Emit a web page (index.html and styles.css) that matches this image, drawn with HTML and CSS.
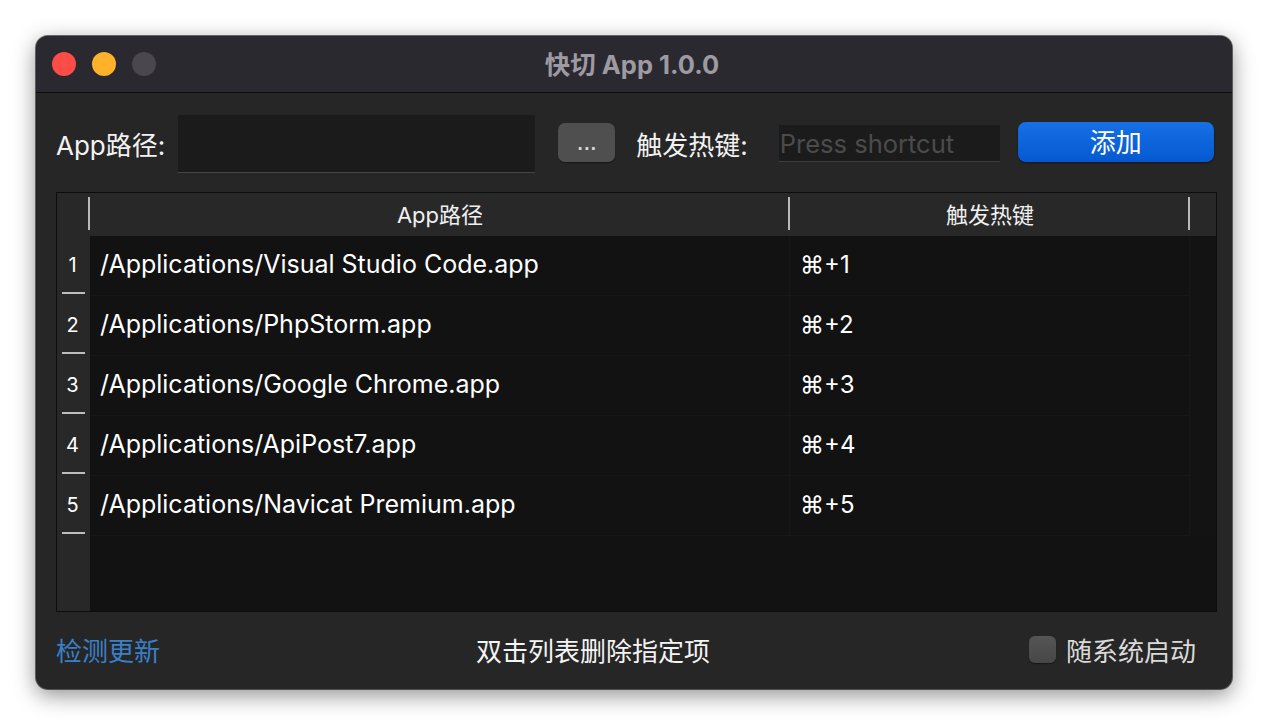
FILE: index.html
```html
<!DOCTYPE html>
<html lang="zh-CN">
<head>
<meta charset="utf-8">
<title>快切 App 1.0.0</title>
<link rel="stylesheet" href="styles.css">
</head>
<body>
<div class="window">
  <div class="titlebar">
    <div class="lights">
      <span class="light red"></span>
      <span class="light yellow"></span>
      <span class="light grey"></span>
    </div>
    <div class="title">快切 App 1.0.0</div>
  </div>
  <div class="content">
    <div class="form-row">
      <label class="label">App路径:</label>
      <div class="path-input"></div>
      <button class="dots-btn">...</button>
      <label class="label hotkey-label">触发热键:</label>
      <div class="shortcut-input">Press shortcut</div>
      <button class="add-btn">添加</button>
    </div>
    <div class="table">
      <div class="thead">
        <div class="corner"><span class="sep"></span></div>
        <div class="th th-path">App路径<span class="sep"></span></div>
        <div class="th th-key">触发热键<span class="sep"></span></div>
        <div class="th-rest"></div>
      </div>
      <div class="tbody">
        <div class="row">
          <div class="num">1<span class="tick"></span></div>
          <div class="cell cell-path">/Applications/Visual Studio Code.app</div>
          <div class="cell cell-key">⌘+1</div>
          <div class="cell-rest"></div>
        </div>
        <div class="row">
          <div class="num">2<span class="tick"></span></div>
          <div class="cell cell-path">/Applications/PhpStorm.app</div>
          <div class="cell cell-key">⌘+2</div>
          <div class="cell-rest"></div>
        </div>
        <div class="row">
          <div class="num">3<span class="tick"></span></div>
          <div class="cell cell-path">/Applications/Google Chrome.app</div>
          <div class="cell cell-key">⌘+3</div>
          <div class="cell-rest"></div>
        </div>
        <div class="row">
          <div class="num">4<span class="tick"></span></div>
          <div class="cell cell-path">/Applications/ApiPost7.app</div>
          <div class="cell cell-key">⌘+4</div>
          <div class="cell-rest"></div>
        </div>
        <div class="row">
          <div class="num">5<span class="tick"></span></div>
          <div class="cell cell-path">/Applications/Navicat Premium.app</div>
          <div class="cell cell-key">⌘+5</div>
          <div class="cell-rest"></div>
        </div>
        <div class="filler">
          <div class="filler-num"></div>
          <div class="filler-body"></div>
        </div>
      </div>
    </div>
    <div class="footer">
      <a class="update-link">检测更新</a>
      <span class="hint">双击列表删除指定项</span>
      <label class="autostart"><span class="checkbox"></span>随系统启动</label>
    </div>
  </div>
</div>
</body>
</html>
```

FILE: styles.css
```css
* { box-sizing: border-box; }
html, body {
  margin: 0;
  padding: 0;
  background: #ffffff;
  width: 1268px;
  height: 726px;
  overflow: hidden;
  font-family: Inter, "Noto Sans CJK SC", sans-serif;
}
body { padding: 36px 0 0 36px; }

.window {
  width: 1196px;
  height: 653px;
  border-radius: 12px;
  background: #262626;
  overflow: hidden;
  display: flex;
  flex-direction: column;
  box-shadow: 0 0 0 1px rgba(0,0,0,0.55), 0 6px 22px rgba(0,0,0,0.45);
}

.titlebar {
  height: 57px;
  flex: none;
  background: #2b2930;
  border-bottom: 1px solid #0c0c0c;
  display: flex;
  align-items: center;
  position: relative;
}
.lights {
  display: flex;
  gap: 16px;
  padding-left: 16px;
}
.light {
  width: 24px;
  height: 24px;
  border-radius: 50%;
  display: block;
}
.light.red { background: #fe4c48; }
.light.yellow { background: #fdb22a; }
.light.grey { background: #4a474e; }
.title {
  position: absolute;
  left: 0;
  right: 0;
  top: 0;
  bottom: 0;
  display: flex;
  align-items: center;
  justify-content: center;
  color: #9d9aa2;
  font-size: 25.5px;
  font-weight: 700;
  padding: 0 4px 4px 0;
  pointer-events: none;
}

.content {
  flex: 1;
  display: flex;
  flex-direction: column;
  padding: 22px 15px 0 20px;
}

.form-row {
  display: flex;
  align-items: center;
  height: 58px;
  color: #fff;
}
.label {
  font-size: 26px;
  color: #f2f2f2;
  white-space: nowrap;
  padding-bottom: 2px;
}
.path-input {
  width: 357px;
  height: 58px;
  margin-left: 13px;
  background: #1b1b1b;
  border-bottom: 1px solid #454545;
}
.dots-btn {
  width: 57px;
  height: 39px;
  margin-left: 23px;
  margin-bottom: 4px;
  border: none;
  border-radius: 7px;
  background: #4f4f4f;
  color: #d8d8d8;
  font-family: "DejaVu Sans", sans-serif;
  font-size: 15px;
  font-weight: 700;
  letter-spacing: 1px;
  line-height: 1;
  padding: 6px 0 0 1px;
  box-shadow: 0 1px 1px rgba(0,0,0,0.4);
}
.hotkey-label { margin-left: 21px; }
.shortcut-input {
  width: 221px;
  height: 37px;
  margin-left: 31px;
  margin-bottom: 2px;
  background: #1b1b1b;
  border-bottom: 1px solid #3d3d3d;
  color: #4b4b4b;
  font-size: 25.5px;
  line-height: 37px;
  padding-left: 1px;
  white-space: nowrap;
  overflow: hidden;
}
.add-btn {
  width: 196px;
  height: 40px;
  margin-left: 18px;
  margin-bottom: 4px;
  border: none;
  border-radius: 8px;
  background: linear-gradient(#1670e6, #0559d0);
  color: #fff;
  font-family: inherit;
  font-size: 26px;
  padding: 0 0 4px;
  box-shadow: 0 1px 2px rgba(0,0,0,0.5);
}

.table {
  margin-top: 19px;
  width: 1161px;
  height: 420px;
  border: 1px solid #0d0d0d;
  background: #121212;
  display: flex;
  flex-direction: column;
}
.thead {
  height: 43px;
  flex: none;
  display: flex;
  background: #282828;
  color: #f0f0f0;
  font-size: 22px;
}
.corner {
  width: 33px;
  position: relative;
}
.sep {
  position: absolute;
  right: 0;
  top: 4px;
  width: 2px;
  height: 33px;
  background: #b9b9b9;
}
.th {
  position: relative;
  display: flex;
  align-items: center;
  justify-content: center;
  padding-bottom: 4px;
}
.th-path { width: 700px; }
.th-key { width: 400px; }
.th-rest { flex: 1; }

.tbody {
  flex: 1;
  display: flex;
  flex-direction: column;
}
.row {
  height: 60px;
  display: flex;
  color: #fff;
}
.num {
  width: 33px;
  background: #282828;
  position: relative;
  display: flex;
  align-items: center;
  justify-content: center;
  font-size: 20px;
  padding: 0 2px 3px 0;
}
.tick {
  position: absolute;
  left: 5px;
  width: 23px;
  bottom: 2px;
  height: 2px;
  background: #bdbdbd;
}
.cell {
  display: flex;
  align-items: center;
  font-size: 25px;
  padding: 0 0 3px 10px;
  background: #121212;
  border-right: 1px solid #171717;
  border-bottom: 1px solid #171717;
  white-space: nowrap;
}
.cell-path { width: 700px; }
.cell-key { width: 400px; font-size: 24px; }
.cell-rest { flex: 1; background: #131313; }

.filler {
  flex: 1;
  display: flex;
}
.filler-num { width: 33px; background: #282828; }
.filler-body { flex: 1; background: #121212; }

.footer {
  flex: 1;
  display: flex;
  align-items: center;
  padding: 0 21px 2px 0;
  font-size: 26px;
}
.update-link {
  color: #3a80c9;
  cursor: pointer;
}
.hint {
  color: #f4f4f4;
  margin-left: 316px;
}
.autostart {
  margin-left: auto;
  display: flex;
  align-items: center;
  color: #dadada;
}
.checkbox {
  width: 27px;
  height: 27px;
  border-radius: 6px;
  background: linear-gradient(#555555, #474747);
  margin-right: 10px;
  box-shadow: 0 1px 1px rgba(0,0,0,0.4);
}
```
